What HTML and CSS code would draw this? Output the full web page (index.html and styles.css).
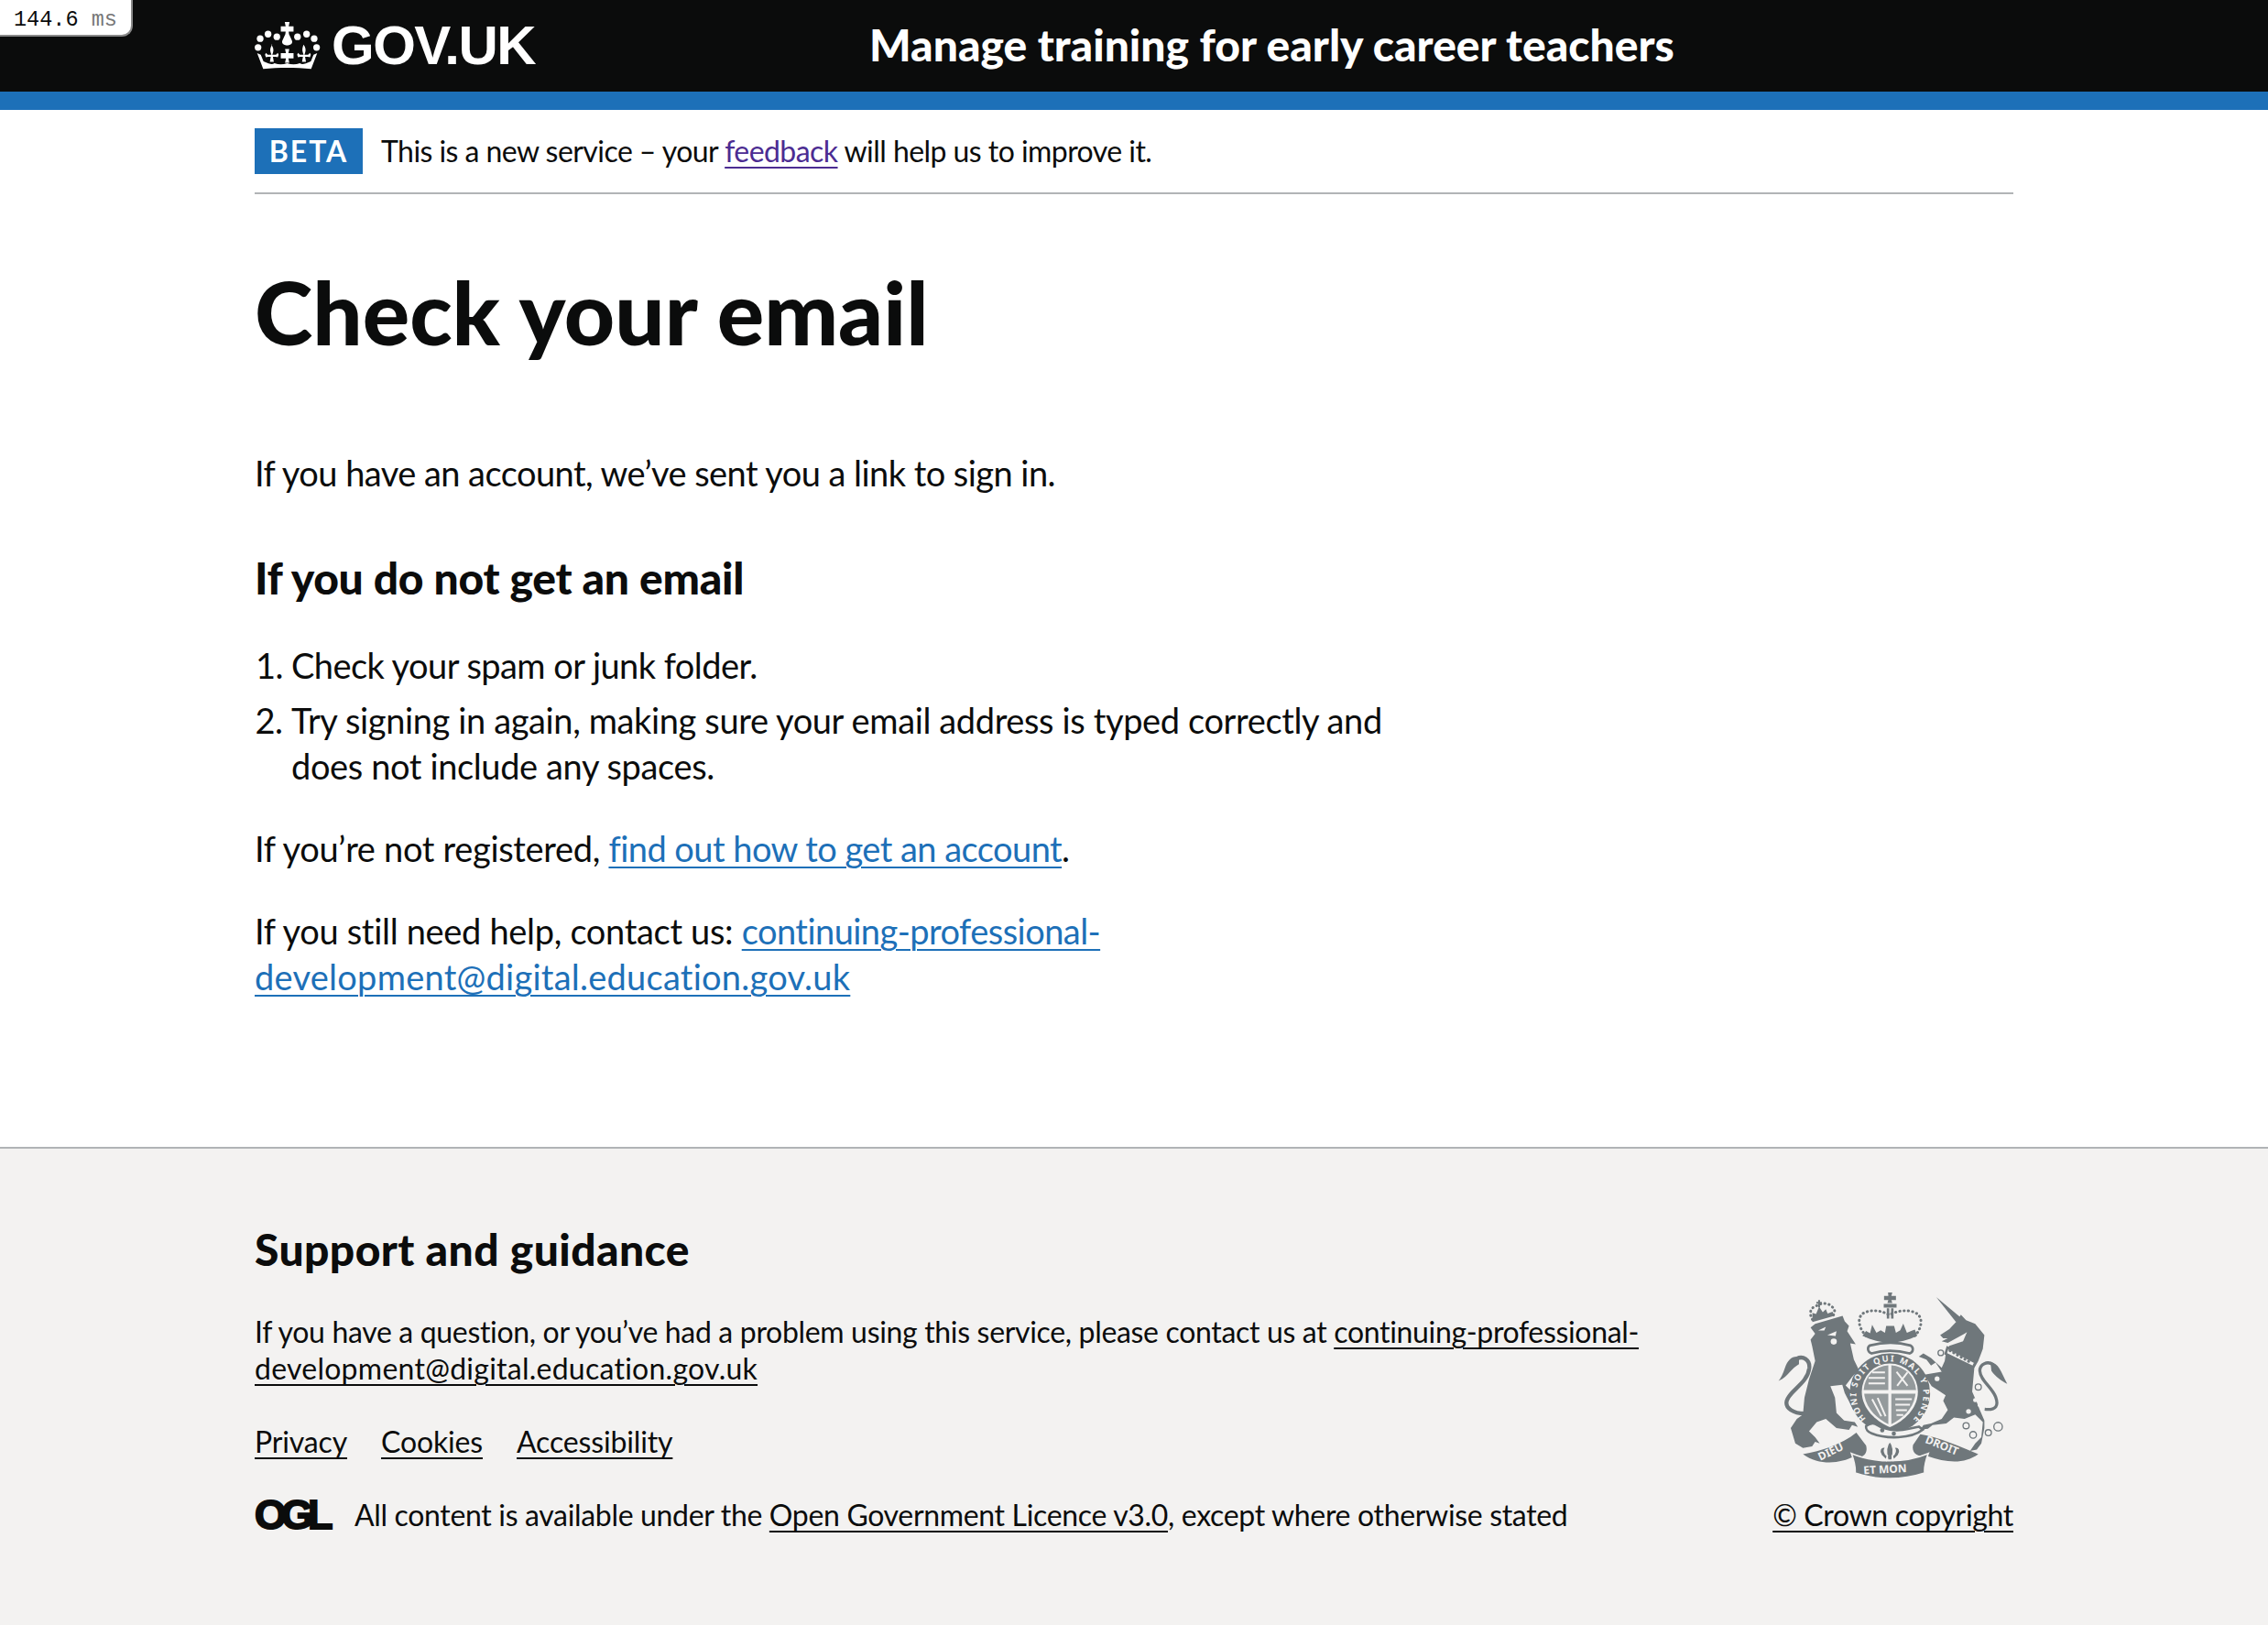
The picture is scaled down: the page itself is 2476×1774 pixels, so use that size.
FILE: index.html
```html
<!DOCTYPE html>
<html lang="en">
<head>
    <meta charset="UTF-8">
    <title>Check your email</title>
    <link rel="stylesheet" href="styles.css">
</head>
<body>
    <div class="timer">144.6 <span class="timer-unit">ms</span></div>

    <header class="site-header">
        <div class="width-container header-inner">
            <a class="logo" href="#">
                <svg class="crown" viewBox="25 33 215 157" aria-hidden="true">
                    <g fill="#fff">
                        <circle cx="42" cy="88" r="11"/><circle cx="68" cy="73" r="11"/><circle cx="97" cy="82" r="11"/>
                        <circle cx="165" cy="82" r="11"/><circle cx="195" cy="73" r="11"/><circle cx="220" cy="88" r="11"/>
                        <circle cx="35" cy="117" r="11"/><circle cx="228" cy="117" r="11"/>
                        <path d="M123 33h16l-3 14h16v18h-16l1 8 10 22c3 9-5 15-16 15s-19-6-16-15l10-22 1-8h-16V47h16z"/>
                        <path d="M124 122h14l-3 14h17v17h-17l3 14h-14l3-14h-17v-17h17z"/>
                        <path d="M78 108c7 8 10 17 6 27l-2 6h12l6-6 3 6-3 8-7-1h-9l3 16H74l3-16h-9l-7 1-3-8 3-6 6 6h12l-2-6c-4-10-1-19 5-27z"/>
                        <path d="M185 108c6 8 9 17 5 27l-2 6h12l6-6 3 6-3 8-7-1h-9l3 16h-13l3-16h-9l-7 1-3-8 3-6 6 6h12l-2-6c-4-10-1-19 2-27z"/>
                        <path d="M32 136l12 5 9 22c20 8 28 12 36 6 14 5 28 5 42 0 14 5 28 5 42 0 8 6 16 2 36-6l9-22 12-5-20 52c-50-5-108-5-158 0z"/>
                    </g>
                </svg>
                <span class="logo-text">GOV.UK</span>
            </a>
            <a class="service-name" href="#">Manage training for early career teachers</a>
        </div>
    </header>
    <div class="header-stripe"></div>

    <div class="width-container">
        <div class="phase-banner">
            <strong class="phase-tag">BETA</strong>
            <span>This is a new service – your <a class="link-visited" href="#">feedback</a> will help us to improve it.</span>
        </div>

        <main class="main">
            <div class="column-two-thirds">
                <h1>Check your email</h1>
                <p>If you have an account, we’ve sent you a link to sign in.</p>
                <h2 class="section-title">If you do not get an email</h2>
                <ol class="steps">
                    <li>Check your spam or junk folder.</li>
                    <li>Try signing in again, making sure your email address is typed correctly and does not include any spaces.</li>
                </ol>
                <p class="loose">If you’re not registered, <a href="#">find out how to get an account</a>.</p>
                <p class="loose">If you still need help, contact us: <a href="#">continuing-professional-<br><span class="email-end">development@digital.education.gov.uk</span></a></p>
            </div>
        </main>
    </div>

    <footer class="footer">
        <div class="width-container footer-inner">
            <div class="footer-left">
                <h2 class="footer-title">Support and guidance</h2>
                <p class="footer-text">If you have a question, or you’ve had a problem using this service, please contact us at <a href="#">continuing-professional-<br><span class="email-end">development@digital.education.gov.uk</span></a></p>
                <ul class="footer-links">
                    <li><a href="#">Privacy</a></li>
                    <li><a href="#">Cookies</a></li>
                    <li><a href="#">Accessibility</a></li>
                </ul>
                <div class="licence">
                    <span class="ogl">OGL</span>
                    <span>All content is available under the <a href="#">Open Government Licence v3.0</a>, except where otherwise stated</span>
                </div>
            </div>
            <div class="footer-right">
                <svg class="crest" viewBox="120 88 760 620" aria-hidden="true">
                    <defs>
                        <path id="garter" d="M412 504A110 110 0 1 1 568 504"/>
                    </defs>

                    <!-- lion -->
                    <g transform="translate(120 75)">
                        <path class="crest-fill" d="M110 130L125 118L215 92L222 110L236 125L230 142L258 185L240 182L252 235L268 268L246 292L225 320L270 365L282 392L274 406L256 396L250 402L236 372L222 345L214 318L175 322L190 360L195 410L220 435L255 440L265 456L246 450L236 466L195 460L160 430L130 440L105 470L125 490L140 510L125 505L115 520L85 525L60 510L45 460L65 430L85 415L90 360L105 300L125 240L115 190L110 170L125 150z"/>
                        <path class="crest-line" d="M90 412C55 412 25 395 32 370C42 335 100 315 106 262C108 235 85 222 65 232"/>
                        <path class="crest-fill" d="M72 226C50 222 35 235 26 262C20 282 12 296 5 305C22 298 34 286 42 276C50 266 62 256 72 250z"/>
                        <path class="crest-cut" d="M135 140L160 128L155 140zM165 155L195 142L192 158z"/>
                        <circle class="crest-cut" cx="186" cy="176" r="10"/>
                        <path class="crest-dots" d="M116 104C105 85 108 65 128 60C142 48 170 48 180 62C192 68 190 84 184 90"/>
                        <path class="crest-fill" d="M116 112L188 92L182 78L166 84L160 70L150 80L138 62L128 86L116 82z"/>
                        <path class="crest-fill" d="M135 40h6v6h6v6h-6v12h-6V52h-6v-6h6z"/>
                    </g>

                    <!-- royal crown -->
                    <path class="crest-fill" d="M484 90h14l-3 11h15v14h-15l3 10h-16l3-10h-14v-14h14z"/>
                    <path class="crest-fill" d="M470 128h42v12h-42zM480 142h8v34h-8zM494 142h8v34h-8z"/>
                    <path class="crest-dots" d="M412 232C385 205 380 165 410 155C435 145 465 150 488 164C512 150 545 145 570 155C600 165 598 205 572 232"/>
                    <path class="crest-fill" d="M400 232L412 216L425 224L432 196L446 222L460 214L474 222L478 200H504L510 222L524 214L534 192L546 222L560 216L572 212L580 232C520 262 460 262 400 232z"/>
                    <path class="crest-band" d="M424 264C470 252 515 252 558 264C570 272 566 286 555 290C510 278 470 278 430 290C418 286 414 272 424 264z"/>

                    <!-- shield and garter -->
                    <ellipse class="crest-fill" cx="490" cy="420" rx="132" ry="130"/>
                    <path class="crest-cut" d="M398 415A92 92 0 0 1 582 415C582 475 530 515 490 532C450 515 398 475 398 415z"/>
                    <path class="crest-fill crest-quarters" d="M404 410A86 86 0 0 1 485 329V410zM495 329A86 86 0 0 1 576 410H495zM495 422H574C570 470 530 505 495 522zM406 422H485V522C450 505 410 470 406 422z"/>
                    <path class="crest-hatch" d="M432 352h42M420 370h54M420 388h54M512 350l36 46M548 352l-34 44M508 440h54M508 458h48M510 476h36M512 492h22M432 440l30 56M450 436l26 60"/>
                    <text class="crest-text garter-text"><textPath href="#garter" textLength="520">HONI SOIT QUI MAL Y PENSE</textPath></text>
                    <path class="crest-band" d="M412 528C440 508 445 528 470 535C510 548 540 540 585 530L598 540C560 570 480 572 430 552C418 548 410 538 412 528z"/>
                    <circle class="crest-fill" cx="465" cy="542" r="7"/>
                    <circle class="crest-fill" cx="503" cy="553" r="7"/>

                    <!-- unicorn -->
                    <g transform="translate(495 75)">
                        <path class="crest-fill" d="M147 30L228 98L212 112z"/>
                        <path class="crest-fill" d="M212 112L228 88L245 106L275 118L305 155L300 200L285 240L272 262L265 340L280 375L290 400L305 435L305 460L295 510L280 530L258 535L275 510L295 490L300 440L275 415L240 430L205 425L180 445L135 450L120 462L95 465L105 450L130 445L165 430L185 400L170 370L178 352L160 340L132 322L108 285L165 275L155 260L145 245L130 255L115 235L90 225L105 215L130 230L165 262L175 240L180 205L190 190L235 175L248 145L240 150L185 180L165 175L185 165L170 165L160 155L190 135z"/>
                        <path class="crest-band" d="M184 196L276 244L268 260L178 216z"/>
                        <path class="crest-dots" d="M192 206L262 246"/>
                        <path class="crest-line crest-thin" d="M306 398C345 402 352 385 342 358C330 325 292 305 290 272C290 250 315 238 334 252"/>
                        <path class="crest-fill" d="M325 244C352 246 358 272 380 315C360 304 342 292 328 272z"/>
                        <circle class="crest-cut" cx="275" cy="368" r="7"/>
                        <circle class="crest-cut" cx="253" cy="405" r="8"/>
                        <circle class="crest-cut" cx="288" cy="385" r="5"/>
                        <g class="crest-rings">
                            <circle cx="162" cy="213" r="9"/>
                            <circle cx="150" cy="298" r="10"/>
                            <circle cx="285" cy="325" r="10"/>
                            <circle cx="245" cy="452" r="10"/>
                            <circle cx="268" cy="482" r="11"/>
                            <circle cx="318" cy="475" r="10"/>
                            <circle cx="350" cy="455" r="14"/>
                        </g>
                    </g>

                    <!-- motto scroll -->
                    <path class="crest-fill" d="M205 620C265 610 330 590 380 550L412 592C420 620 398 638 372 628C330 650 260 660 205 620z"/>
                    <path class="crest-fill" d="M590 555C650 565 720 595 780 620C735 652 680 650 612 626C585 632 560 618 566 590z"/>
                    <path class="crest-fill crest-fold" d="M364 618C372 640 378 662 376 682C450 706 530 706 604 682C602 662 608 640 616 618C540 650 440 650 364 618z"/>
                    <g class="crest-fold">
                        <path class="crest-fill" d="M490 578C504 592 504 612 497 640H483C476 612 476 592 490 578z"/>
                        <path class="crest-fill" d="M476 598C458 592 452 612 462 624C468 630 474 636 478 640L482 626C472 618 470 608 476 598z"/>
                        <path class="crest-fill" d="M504 598C522 592 528 612 518 624C512 630 506 636 502 640L498 626C508 618 510 608 504 598z"/>
                    </g>
                    <text class="crest-text scroll-text" transform="translate(262 642) rotate(-26)">DIEU</text>
                    <text class="crest-text scroll-text" transform="translate(404 686) rotate(-3)">ET MON</text>
                    <text class="crest-text scroll-text" transform="translate(604 582) rotate(22)">DROIT</text>
                </svg>
                <a class="copyright" href="#">© Crown copyright</a>
            </div>
        </div>
    </footer>
</body>
</html>
```

FILE: styles.css
```css
/* page */
html {
    margin: 0;
    padding: 0;
    background-color: #f3f2f1;
}
body {
    margin: 0;
    padding: 0;
    font-family: Lato, Arial, sans-serif;
    font-size: 38px;
    line-height: 50px;
    letter-spacing: -0.55px;
    color: #0b0c0c;
    background-color: #fff;
}
a {
    color: #1d70b8;
    text-decoration: underline;
    text-decoration-thickness: 2px;
    text-underline-offset: 5px;
}
.width-container {
    width: 1920px;
    margin: 0 auto;
}

/* timer in the corner */
.timer {
    position: absolute;
    top: 0;
    left: 0;
    width: 128px;
    height: 38px;
    padding-left: 15px;
    background-color: #fff;
    border-bottom: 2px solid #888;
    border-right: 2px solid #888;
    border-bottom-right-radius: 12px;
    font-family: "Liberation Mono", monospace;
    font-size: 23.5px;
    line-height: 44px;
    letter-spacing: 0;
}
.timer-unit {
    color: #777;
}

/* header */
.site-header {
    background-color: #0b0c0c;
    height: 100px;
}
.header-inner {
    display: flex;
    align-items: center;
    height: 100px;
}
.header-stripe {
    height: 20px;
    background-color: #1d70b8;
}
.logo {
    display: flex;
    align-items: center;
    width: 671px;
    color: #fff;
    text-decoration: none;
}
.crown {
    width: 72px;
    height: 52px;
    margin-right: 12px;
}
.logo-text {
    font-family: "Liberation Sans", Arial, sans-serif;
    font-weight: 700;
    font-size: 60px;
    line-height: 60px;
    letter-spacing: -1.5px;
}
.service-name {
    margin-top: -2px;
    color: #fff;
    text-decoration: none;
    font-weight: 900;
    font-size: 48px;
    letter-spacing: 0;
}

/* phase banner */
.phase-banner {
    display: flex;
    align-items: center;
    height: 90px;
    border-bottom: 2px solid #b1b4b6;
    font-size: 32px;
    letter-spacing: -0.55px;
}
.phase-tag {
    width: 118px;
    height: 50px;
    margin-right: 20px;
    background-color: #1d70b8;
    color: #fff;
    font-size: 32px;
    line-height: 50px;
    text-align: center;
    letter-spacing: 2px;
}
.link-visited {
    color: #4c2c92;
}

/* content */
.main {
    padding: 78px 0 121px;
}
.column-two-thirds {
    width: 1240px;
}
h1 {
    margin: 0 0 101px;
    font-size: 96px;
    line-height: 100px;
    font-weight: 900;
    letter-spacing: 0;
}
p {
    margin: 0 0 40px;
}
.loose {
    letter-spacing: -0.32px;
}
.loose a {
    letter-spacing: -0.55px;
}
h2 {
    margin: 0 0 40px;
    font-size: 48px;
    line-height: 60px;
    font-weight: 900;
    letter-spacing: -0.25px;
}
.section-title {
    margin-top: 60px;
}
.steps {
    margin: 0 0 40px;
    padding-left: 40px;
}
.steps li {
    margin-bottom: 10px;
}
.steps li:last-child {
    letter-spacing: -0.38px;
}
.email-end {
    letter-spacing: 0.25px;
}

/* footer */
.footer {
    background-color: #f3f2f1;
    border-top: 2px solid #b1b4b6;
    padding: 80px 0 90px;
    font-size: 32px;
    line-height: 40px;
    letter-spacing: -0.33px;
}
.footer a {
    color: #0b0c0c;
}
.footer-inner {
    display: flex;
    justify-content: space-between;
    align-items: flex-end;
}
.footer-left {
    width: 1540px;
}
.footer-title {
    margin: 0 0 40px;
    letter-spacing: 0.4px;
}
.footer-text {
    margin: 0 0 40px;
}
.footer-links {
    display: flex;
    gap: 37px;
    margin: 0 0 40px;
    padding: 0;
    list-style: none;
    letter-spacing: -0.15px;
}
.licence {
    display: flex;
    align-items: center;
    gap: 27px;
}
.ogl {
    width: 82px;
    font-family: "Liberation Sans", Arial, sans-serif;
    font-weight: 700;
    font-size: 45px;
    line-height: 40px;
    letter-spacing: -6px;
    -webkit-text-stroke: 2px #0b0c0c;
}
.footer-right {
    display: flex;
    flex-direction: column;
    align-items: center;
}

/* coat of arms */
.crest {
    width: 253px;
    height: 207px;
    margin-bottom: 17px;
}
.crest-fill {
    fill: #6f777b;
}
.crest-quarters {
    opacity: 0.72;
}
.crest-cut {
    fill: #f3f2f1;
}
.crest-hatch {
    fill: none;
    stroke: #f3f2f1;
    stroke-width: 6;
}
.crest-band {
    fill: #f3f2f1;
    stroke: #6f777b;
    stroke-width: 8;
}
.crest-fold path,
path.crest-fold {
    stroke: #f3f2f1;
    stroke-width: 5;
}
.crest-line {
    fill: none;
    stroke: #6f777b;
    stroke-width: 13;
}
.crest-thin {
    stroke-width: 10;
}
.crest-dots {
    fill: none;
    stroke: #6f777b;
    stroke-width: 9;
    stroke-linecap: round;
    stroke-dasharray: 1 13;
}
.crest-rings circle {
    fill: #f3f2f1;
    stroke: #6f777b;
    stroke-width: 4;
}
.crest-text {
    font-family: "Noto Sans", Arial, sans-serif;
    font-weight: 700;
    letter-spacing: 0;
    fill: #f3f2f1;
}
.garter-text {
    font-size: 28px;
}
.scroll-text {
    font-size: 36px;
}
```
